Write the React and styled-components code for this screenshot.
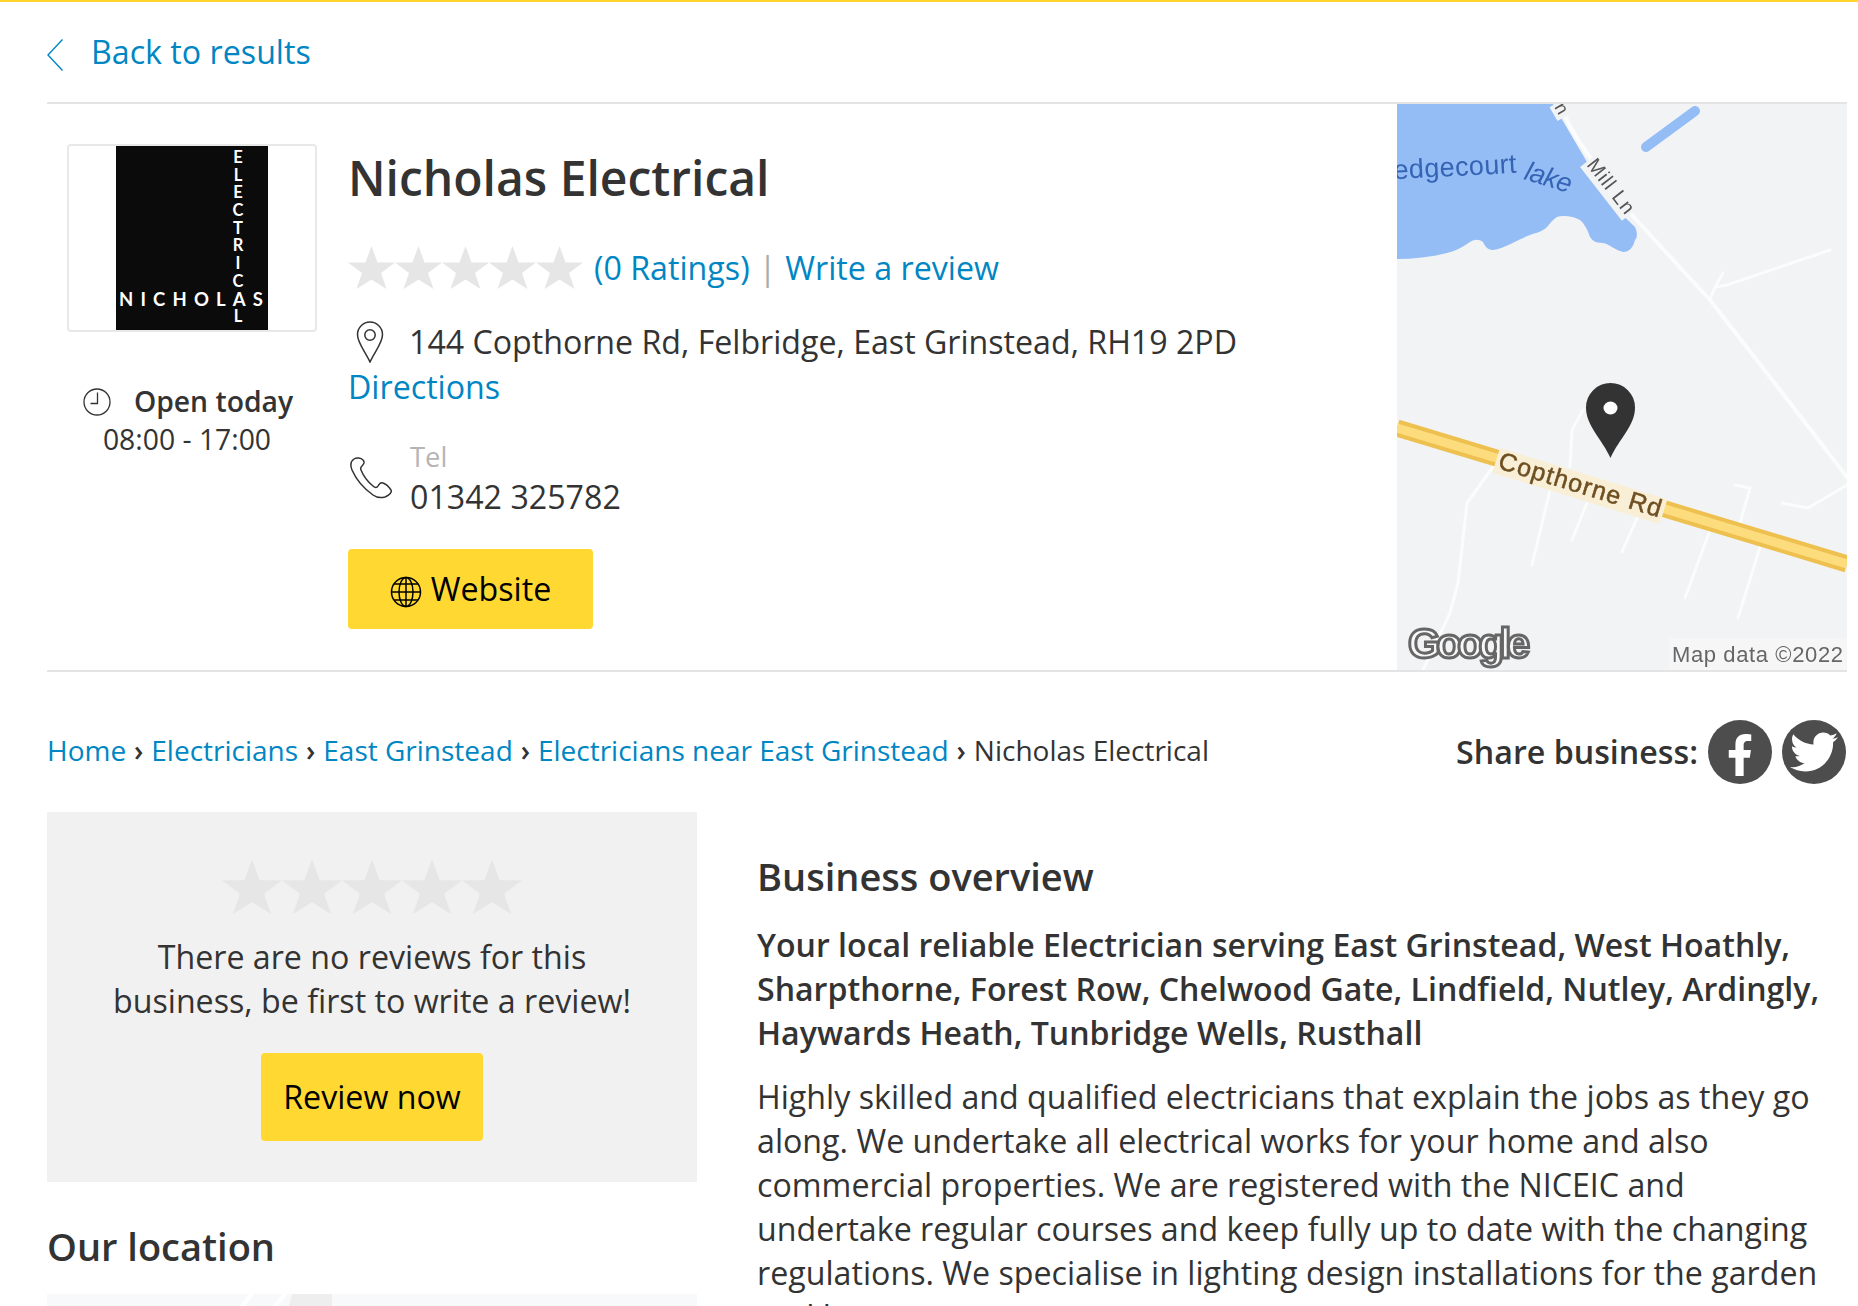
import React from "react";
import styled, { createGlobalStyle } from "styled-components";
import { FaFacebookF, FaTwitter } from "react-icons/fa";

const GlobalStyle = createGlobalStyle`
  html, body {
    margin: 0;
    padding: 0;
    background: #fff;
    overflow: hidden;
  }
  body {
    font-family: "Open Sans", "Noto Sans", sans-serif;
    font-size: 32.2px;
    line-height: 44px;
    color: #333;
  }
  * { box-sizing: border-box; }
`;

const Page = styled.div`
  width: 1858px;
  height: 1306px;
  overflow: hidden;
  border-top: 2px solid #ffd52e;
  padding: 0 11px 0 47px;
`;

const Link = styled.a`
  color: #0086c3;
  text-decoration: none;
`;

const BackRow = styled.div`
  height: 102px;
  display: flex;
  align-items: center;
  gap: 28px;
  padding-bottom: 1px;
  border-bottom: 2px solid #e4e4e4;
`;

const BackChevron = styled.svg`
  margin-top: 6px;
  flex: none;
`;

const Hero = styled.section`
  display: flex;
  height: 568px;
  border-bottom: 2px solid #e4e4e4;
`;

const LogoColumn = styled.div`
  width: 301px;
  padding: 40px 0 0 20px;
  flex: none;
`;

const LogoBox = styled.div`
  width: 250px;
  height: 188px;
  border: 2px solid #e8e8e8;
  border-radius: 4px;
  display: flex;
  justify-content: center;
`;

const HoursBlock = styled.div`
  width: 240px;
  margin-top: 50px;
  text-align: center;
  font-size: 28.3px;
  line-height: 38px;
`;

const HoursTitle = styled.div`
  display: flex;
  justify-content: center;
  align-items: center;
  gap: 23px;
  padding-left: 2px;
  font-weight: 600;
`;

const ClockSvg = styled.svg`
  margin-top: 2px;
`;

const Info = styled.div`
  flex: 1;
  padding-top: 38px;
`;

const Title = styled.h1`
  margin: 0;
  font-size: 48px;
  line-height: 72px;
  font-weight: 600;
`;

const RatingRow = styled.div`
  display: flex;
  align-items: center;
  margin-top: 32px;
  height: 44px;
`;

const Stars = styled.div`
  display: flex;
  flex: none;
  margin-right: ${(p) => p.$after || 0}px;
`;

const Divider = styled.span`
  color: #aaa;
  margin: 0 9px;
`;

const Address = styled.div`
  display: flex;
  align-items: center;
  margin-top: 29px;
  height: 46px;
  gap: 25px;
  padding-left: 8px;
  font-size: 32.15px;
`;

const PhoneRow = styled.div`
  display: flex;
  align-items: flex-start;
  margin-top: 29px;
  padding-left: 2px;
  gap: 18px;
`;

const PhoneIcon = styled.svg`
  margin-top: 19px;
  flex: none;
`;

const TelLabel = styled.div`
  font-size: 27.4px;
  line-height: 37px;
  color: #b5b5b5;
`;

const TelNumber = styled.div`
  line-height: 44px;
`;

const Button = styled.a`
  display: inline-flex;
  align-items: center;
  justify-content: center;
  gap: 9px;
  width: ${(p) => p.$width}px;
  height: ${(p) => p.$height}px;
  background: #ffd931;
  border-radius: 4px;
  color: #000;
  text-decoration: none;
`;

const WebsiteWrap = styled.div`
  margin-top: 30px;
`;

const GlobeSvg = styled.svg`
  margin-top: 6px;
`;

const MapPane = styled.div`
  position: relative;
  width: 450px;
  height: 566px;
  flex: none;
  overflow: hidden;
  background: #f2f3f5;
`;

const MapBase = styled.svg`
  display: block;
  filter: blur(0.7px);
`;

const MapPin = styled.svg`
  position: absolute;
  left: 189px;
  top: 279px;
`;

const CrumbRow = styled.div`
  display: flex;
  justify-content: space-between;
  align-items: center;
  height: 64px;
  margin: 48px 1px 0 0;
  font-size: 28px;
`;

const Crumbs = styled.div`
  white-space: nowrap;
  padding-bottom: 4px;
`;

const Sep = styled.span`
  margin: 0 7.9px;
  font-weight: 600;
`;

const Share = styled.div`
  display: flex;
  align-items: center;
  gap: 10px;
  font-size: 32.2px;
  font-weight: 600;
`;

const ShareIcon = styled.span`
  width: 64px;
  height: 64px;
  border-radius: 50%;
  background: #4d4d4d;
  color: #fff;
  display: flex;
  align-items: center;
  justify-content: center;
  font-size: ${(p) => p.$size}px;
  padding-top: ${(p) => p.$shift || 0}px;
`;

const Columns = styled.div`
  display: flex;
  gap: 60px;
  margin-top: 28px;
`;

const Side = styled.aside`
  width: 650px;
  flex: none;
`;

const ReviewBox = styled.div`
  height: 370px;
  background: #f1f1f1;
  padding-top: 46px;
  display: flex;
  flex-direction: column;
  align-items: center;
  text-align: center;
`;

const ReviewText = styled.p`
  margin: 17px 0 30px;
`;

const SectionTitle = styled.h2`
  margin: 0;
  font-size: 38px;
  line-height: 48px;
  font-weight: 600;
`;

const LocationTitle = styled(SectionTitle)`
  margin-top: 40px;
`;

const SmallMap = styled.div`
  height: 200px;
  margin-top: 24px;
  background: #f8f9fa;
`;

const Overview = styled.div`
  flex: 1;
  padding: 40px 15px 0 0;
`;

const Lead = styled.p`
  margin: 23px 0 0;
  font-size: 32.1px;
  font-weight: 600;
`;

const Body = styled.p`
  margin: 20px 0 0;
`;

const Star = ({ size = 47, color = "#e6e6e6" }) => (
  <svg width={size} height={size} viewBox="0 0 47 47">
    <polygon
      fill={color}
      points="23.5,1 29.5,17.500 47,17.500 33,28 38.500,44 23.5,34.500 8.500,44 14,28 0,17.500 17.500,17.500"
    />
  </svg>
);

const StarRow = ({ size, after }) => (
  <Stars $after={after}>
    {[0, 1, 2, 3, 4].map((i) => (
      <Star key={i} size={size} />
    ))}
  </Stars>
);

const ChevronLeft = () => (
  <BackChevron width="16" height="32" viewBox="0 0 16 32" fill="none" stroke="#0086c3" strokeWidth="1.4">
    <path d="M15.5 .5 1 16l14.5 15.5" />
  </BackChevron>
);

const PinIcon = () => (
  <svg width="28" height="42" viewBox="0 0 28 42" fill="none" stroke="#333" strokeWidth="1.5">
    <path d="M14 41C9 30 1.5 22 1.5 13.5a12.5 12.5 0 0 1 25 0C26.500 22 19 30 14 41Z" />
    <circle cx="14" cy="14" r="5.200" />
  </svg>
);

const ClockIcon = () => (
  <ClockSvg width="28" height="28" viewBox="0 0 28 28" fill="none" stroke="#333" strokeWidth="1.3">
    <circle cx="14" cy="14" r="13" />
    <path d="M14.500 4.500V15.500H7.500" />
  </ClockSvg>
);

const GlobeIcon = () => (
  <GlobeSvg width="32" height="32" viewBox="0 0 32 32" fill="none" stroke="#000" strokeWidth="1.5">
    <circle cx="16" cy="16" r="14.500" />
    <ellipse cx="16" cy="16" rx="7" ry="14.500" />
    <path d="M16 1.500v29M1.500 16h29M4 8h24M4 24h24" />
  </GlobeSvg>
);

// the A of ELECTRICAL is shared with NICHOLAS, so it is skipped in the column
const LogoArt = () => (
  <svg width="152" height="184" viewBox="0 0 152 184" fontFamily="Lato, 'Open Sans', sans-serif" fontWeight="700">
    <rect width="152" height="184" fill="#0b0b0b" />
    <g fill="#fff" fontSize="16.500" textAnchor="middle">
      {"ELECTRICAL".split("").map((ch, i) =>
        i === 8 ? null : (
          <text key={i} x="122" y={17 + i * 17.670}>
            {ch}
          </text>
        )
      )}
    </g>
    <text x="3" y="160" fill="#fff" fontSize="18.500" textLength="144">
      NICHOLAS
    </text>
  </svg>
);

const MapArt = () => (
  <MapBase width="450" height="566" viewBox="0 0 450 566" fontFamily="'Liberation Sans', Arial, sans-serif">
    <rect width="450" height="566" fill="#f2f3f5" />
    <path
      d="M0 0H156L173 29L190 58L213 99L238 123C241 130 240 134 238 136C236 144 232 148 226 148C218 146 212 140 206 139C198 139 195 136 193 133C190 124 186 118 183 116C176 112 166 111 160 113C155 116 153 120 150 123C145 128 138 129 133 131C120 136 108 144 96 146C90 146 88 142 86 138C82 135 78 135 73 138C66 143 58 147 50 149C34 153 16 155 0 155Z"
      fill="#94bcf5"
    />
    <path d="M249 43L298 7" stroke="#94bcf5" strokeWidth="10" strokeLinecap="round" />
    <g fill="none" stroke="#fbfcfc" strokeWidth="3" strokeLinecap="round" strokeLinejoin="round">
      <path d="M163 0C170 20 180 35 190 49L233 109L313 196L383 286L450 373" strokeWidth="4" />
      <path d="M313 196L318 183L330 181L433 146M318 183L326 169" />
      <path d="M96 363L70 399L61 479L53 509L26 566" />
      <path d="M153 386L135 461M190 399L175 436M240 414L225 448" />
      <path d="M313 426L288 494M363 443L341 514" />
      <path d="M338 381L353 384L343 419M385 399L411 404L450 381" />
      <path d="M173 363L175 326L186 306" />
    </g>
    <path d="M0 324L450 460" stroke="#eec04f" strokeWidth="17" fill="none" />
    <path d="M0 324L450 460" stroke="#fddc7e" strokeWidth="9" fill="none" />
    <g transform="translate(100 364) rotate(17)">
      <rect x="-3" y="-20" width="175" height="26" fill="#f9efd6" />
      <text fontSize="25" fill="#6e4f22" stroke="#6e4f22" strokeWidth="0.500" textLength="169">
        Copthorne Rd
      </text>
    </g>
    <text x="-3" y="75" fontSize="27" fill="#3564b4" textLength="123" transform="rotate(-3 0 75)">
      edgecourt
    </text>
    <text x="126" y="75" fontSize="27" fontStyle="italic" fill="#3564b4" textLength="48" transform="rotate(17 126 75)">
      lake
    </text>
    <g transform="translate(189 61) rotate(52)">
      <rect x="-2" y="-16" width="68" height="22" fill="#f2f3f5" />
      <text fontSize="20" fill="#555" textLength="64">
        Mill Ln
      </text>
    </g>
    <g transform="translate(157 3) rotate(60)">
      <rect x="-2" y="-14" width="16" height="18" fill="#f2f3f5" />
      <text fontSize="18" fill="#555">
        n
      </text>
    </g>
    <text
      x="11"
      y="554"
      fontSize="42"
      fontWeight="700"
      fill="#f8f8f8"
      stroke="#666"
      strokeWidth="3"
      textLength="122"
    >
      Google
    </text>
    <rect x="272" y="534" width="178" height="32" fill="#f6f6f7" />
    <text x="275" y="558" fontSize="22" fill="#666" textLength="171">
      Map data ©2022
    </text>
  </MapBase>
);

const LocationPin = () => (
  <MapPin width="50" height="76" viewBox="0 0 50 76">
    <path d="M24.500 75C16 56 0 43 0 24.500A24.500 24.500 0 0 1 49 24.500C49 43 33 56 24.500 75Z" fill="#333" />
    <ellipse cx="24.500" cy="25" rx="7" ry="6.500" fill="#fff" />
  </MapPin>
);

const SmallMapArt = () => (
  <svg width="650" height="200" viewBox="0 0 650 200">
    <path d="M245 0H285V40H235Z" fill="#eeeeef" />
    <path d="M189 20L205 0M222 20L238 0" stroke="#fff" strokeWidth="4" fill="none" />
  </svg>
);

const Crumb = ({ children }) => (
  <>
    <Link href="#">{children}</Link>
    <Sep>›</Sep>
  </>
);

export default function App() {
  return (
    <Page>
      <GlobalStyle />
      <BackRow>
        <ChevronLeft />
        <Link href="#">Back to results</Link>
      </BackRow>

      <Hero>
        <LogoColumn>
          <LogoBox>
            <LogoArt />
          </LogoBox>
          <HoursBlock>
            <HoursTitle>
              <ClockIcon />
              Open today
            </HoursTitle>
            08:00 - 17:00
          </HoursBlock>
        </LogoColumn>

        <Info>
          <Title>Nicholas Electrical</Title>
          <RatingRow>
            <StarRow after={11} />
            <Link href="#">(0 Ratings)</Link>
            <Divider>|</Divider>
            <Link href="#">Write a review</Link>
          </RatingRow>
          <Address>
            <PinIcon />
            144 Copthorne Rd, Felbridge, East Grinstead, RH19 2PD
          </Address>
          <Link href="#">Directions</Link>
          <PhoneRow>
            <PhoneIcon width="42" height="42" viewBox="0 0 42 42" fill="none" stroke="#333" strokeWidth="1.5">
              <path d="M4 2C1 4 0 8 2 13C6 22 13 31 23 38C27 41 31 41 35 40C40 38 42 35 41 33C39 30 36 27 33 26C31 25 29 27 28 29C27 31 25 31 23 29C18 25 13 18 11 13C10 11 11 10 12 9C14 7 15 5 13 3C11 1 7 0 4 2Z" />
            </PhoneIcon>
            <div>
              <TelLabel>Tel</TelLabel>
              <TelNumber>01342 325782</TelNumber>
            </div>
          </PhoneRow>
          <WebsiteWrap>
            <Button href="#" $width={245} $height={80}>
              <GlobeIcon />
              Website
            </Button>
          </WebsiteWrap>
        </Info>

        <MapPane>
          <MapArt />
          <LocationPin />
        </MapPane>
      </Hero>

      <CrumbRow>
        <Crumbs>
          <Crumb>Home</Crumb>
          <Crumb>Electricians</Crumb>
          <Crumb>East Grinstead</Crumb>
          <Crumb>Electricians near East Grinstead</Crumb>
          Nicholas Electrical
        </Crumbs>
        <Share>
          Share business:
          <ShareIcon $size={42} $shift={6}>
            <FaFacebookF />
          </ShareIcon>
          <ShareIcon $size={48}>
            <FaTwitter />
          </ShareIcon>
        </Share>
      </CrumbRow>

      <Columns>
        <Side>
          <ReviewBox>
            <StarRow size={60} />
            <ReviewText>
              There are no reviews for this
              <br />
              business, be first to write a review!
            </ReviewText>
            <Button href="#" $width={222} $height={88}>
              Review now
            </Button>
          </ReviewBox>
          <LocationTitle>Our location</LocationTitle>
          <SmallMap>
            <SmallMapArt />
          </SmallMap>
        </Side>
        <Overview>
          <SectionTitle>Business overview</SectionTitle>
          <Lead>
            Your local reliable Electrician serving East Grinstead, West Hoathly, Sharpthorne, Forest Row, Chelwood Gate,
            Lindfield, Nutley, Ardingly, Haywards Heath, Tunbridge Wells, Rusthall
          </Lead>
          <Body>
            Highly skilled and qualified electricians that explain the jobs as they go along. We undertake all electrical
            works for your home and also commercial properties. We are registered with the NICEIC and undertake regular
            courses and keep fully up to date with the changing regulations. We specialise in lighting design installations
            for the garden and home.
          </Body>
        </Overview>
      </Columns>
    </Page>
  );
}
